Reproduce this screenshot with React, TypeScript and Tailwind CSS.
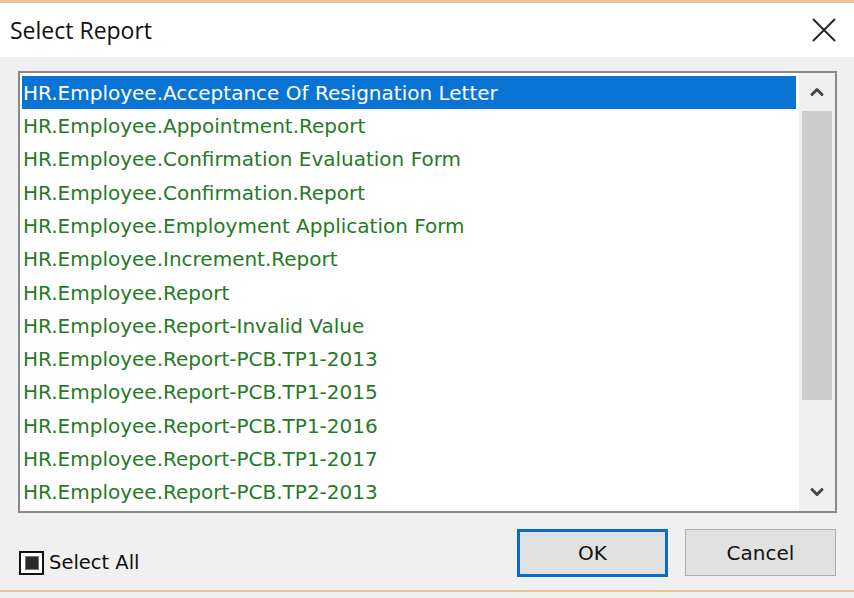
import { ChevronUp, ChevronDown } from 'lucide-react';

const reports = [
  'HR.Employee.Acceptance Of Resignation Letter',
  'HR.Employee.Appointment.Report',
  'HR.Employee.Confirmation Evaluation Form',
  'HR.Employee.Confirmation.Report',
  'HR.Employee.Employment Application Form',
  'HR.Employee.Increment.Report',
  'HR.Employee.Report',
  'HR.Employee.Report-Invalid Value',
  'HR.Employee.Report-PCB.TP1-2013',
  'HR.Employee.Report-PCB.TP1-2015',
  'HR.Employee.Report-PCB.TP1-2016',
  'HR.Employee.Report-PCB.TP1-2017',
  'HR.Employee.Report-PCB.TP2-2013',
];

const ui = { fontFamily: 'Tahoma, "DejaVu Sans", "Noto Sans", sans-serif' };

export default function App() {
  return (
    <div className="w-[854px] h-[598px] flex flex-col bg-[#f0f0f0] overflow-hidden" style={ui}>
      <div className="h-[3px] bg-[#e7c492]" />

      {/* title bar */}
      <div className="h-[54px] bg-white flex items-center justify-between pl-[10px] pr-[18px]">
        <span className="text-[23px] text-[#111]" style={{ fontFamily: '"Open Sans", "Noto Sans", sans-serif' }}>
          Select Report
        </span>
        <svg width="24" height="24" viewBox="0 0 24 24" className="text-[#222]">
          <path d="M1 1 L23 23 M23 1 L1 23" stroke="currentColor" strokeWidth="1.8" fill="none" />
        </svg>
      </div>

      {/* list */}
      <div className="pt-[14px] pl-[18px] pr-[17px]">
        <div className="h-[442px] border-2 border-[#8a8a8a] bg-white flex pl-[2px] pt-[3px] pb-[2px]">
          <div className="flex-1 flex flex-col pr-[3px]">
            {reports.map((r, i) => (
              <div
                key={r}
                className={
                  i === 0
                    ? 'h-[33.33px] flex items-center bg-[#0a74d4] text-white text-[20px] pl-[1px]'
                    : 'h-[33.33px] flex items-center text-[#257a25] text-[20px] pl-[1px]'
                }
              >
                {r}
              </div>
            ))}
          </div>
          <div className="w-[36px] -mt-[3px] -mb-[2px] bg-[#f0f0f0] flex flex-col">
            <div className="h-[38px] flex items-center justify-center text-[#444]">
              <ChevronUp size={20} strokeWidth={3.5} />
            </div>
            <div className="mx-[3px] h-[289px] bg-[#cdcdcd]" />
            <div className="flex-1" />
            <div className="h-[38px] flex items-center justify-center text-[#444]">
              <ChevronDown size={20} strokeWidth={3.5} />
            </div>
          </div>
        </div>
      </div>

      {/* footer */}
      <div className="flex items-center pl-[19px] pr-[18px] pt-[15px]">
        <div className="flex items-center gap-[5px] mt-[20px]">
          <div className="w-[25px] h-[24px] border-2 border-[#111] bg-white flex items-center justify-center">
            <div className="w-[14px] h-[14px] bg-[#2a2a2a] border border-[#777]" />
          </div>
          <span className="text-[19.5px] text-[#111]">Select All</span>
        </div>
        <div className="flex-1" />
        <button className="w-[151px] h-[48px] border-[3px] border-[#0a6cc6] bg-[#e1e1e1] text-[20px] text-[#111]">
          OK
        </button>
        <button className="ml-[17px] w-[151px] h-[47px] border border-[#adadad] bg-[#e1e1e1] text-[20px] text-[#111]">
          Cancel
        </button>
      </div>

      <div className="flex-1" />
      <div className="h-[2px] bg-[#e7c492] mb-[6px]" />
    </div>
  );
}
